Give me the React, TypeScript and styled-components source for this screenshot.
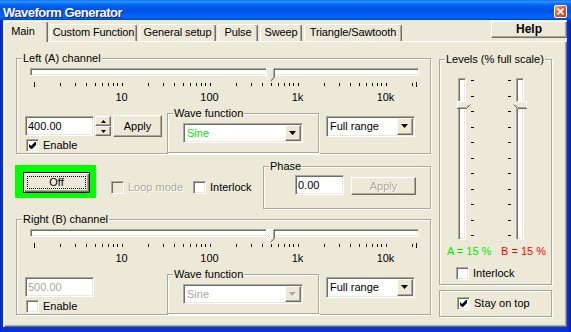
import React from "react";
import styled, { createGlobalStyle, css } from "styled-components";

const face = "#ece9d8";
const light = "#ffffff";
const shadow = "#aca899";
const dark = "#716f64";
const lime = "#00e800";

const GlobalStyle = createGlobalStyle`
  html, body { margin: 0; padding: 0; background: ${face}; }
  body {
    font-family: "Liberation Sans", Arial, sans-serif;
    font-size: 11px;
    line-height: 13px;
    color: #000;
  }
`;

const raised = css`
  background: ${face};
  border: 1px solid;
  border-color: ${light} ${dark} ${dark} ${light};
  box-shadow: inset -1px -1px ${shadow};
`;

const sunken = css`
  border: 1px solid;
  border-color: ${shadow} ${light} ${light} ${shadow};
  box-shadow: inset 1px 1px ${dark}, inset -1px -1px ${face};
`;

const disabledText = css`
  color: ${shadow};
  text-shadow: 1px 1px ${light};
`;

const Window = styled.div`
  width: 571px;
  height: 332px;
  display: flex;
  flex-direction: column;
  background: linear-gradient(to right, #001ea8 0, #0831d9 1px, #0831d9 568px, #0019b8 100%);
`;

const TitleBar = styled.div`
  height: 20px;
  flex: none;
  display: flex;
  align-items: flex-start;
  justify-content: space-between;
  padding: 0 4px 0 3px;
  background: linear-gradient(
    to bottom,
    #0058ee 0%, #3593ff 5%, #288eff 10%, #127dff 15%, #036ffc 20%,
    #0262ee 28%, #0057e5 38%, #0054e3 48%, #0055eb 60%, #005bf5 70%,
    #026afe 80%, #0062ef 90%, #0052d6 96%, #0040ab 100%
  );
`;

const Title = styled.span`
  padding-top: 5px;
  line-height: 15px;
  font-size: 13px;
  font-weight: 700;
  letter-spacing: -0.5px;
  color: #fff;
  text-shadow: 1px 1px #0a1883;
`;

const CloseBox = styled.div`
  margin-top: 5px;
  width: 13px;
  height: 13px;
  box-sizing: border-box;
  border: 1px solid #fff;
  border-radius: 2px;
  background: linear-gradient(135deg, #f2a58a 0%, #e0603a 45%, #c2401e 100%);
  display: flex;
  align-items: center;
  justify-content: center;
`;

const Body = styled.div`
  flex: 1;
  min-height: 0;
  margin: 0 4px 5px 3px;
  background: ${face};
  display: flex;
  flex-direction: column;
`;

const TabRow = styled.div`
  height: 21px;
  flex: none;
  display: flex;
  align-items: flex-end;
  padding-left: 1px;
`;

const Tab = styled.div<{ $w: number; $active?: boolean }>`
  position: relative;
  z-index: ${(p) => (p.$active ? 1 : 0)};
  box-sizing: border-box;
  flex: none;
  width: ${(p) => p.$w}px;
  height: ${(p) => (p.$active ? 21 : 17)}px;
  margin: 0 2px ${(p) => (p.$active ? -1 : 0)}px 0;
  padding: ${(p) => (p.$active ? "3px 6px 0 0" : "1px 0 0 0")};
  background: ${face};
  border: 1px solid;
  border-bottom: none;
  border-color: ${light} ${dark} transparent ${light};
  border-radius: 3px 3px 0 0;
  box-shadow: inset -1px 0 ${shadow};
  text-align: center;
  white-space: nowrap;
  letter-spacing: -0.1px;
`;

const Button = styled.div<{ $w: number; $h: number; $ml?: number; $mt?: number; $bold?: boolean; $off?: boolean }>`
  ${raised}
  box-sizing: border-box;
  flex: none;
  width: ${(p) => p.$w}px;
  height: ${(p) => p.$h}px;
  margin: ${(p) => p.$mt ?? 0}px 0 0 ${(p) => p.$ml ?? 0}px;
  display: flex;
  align-items: center;
  justify-content: center;
  font-weight: ${(p) => (p.$bold ? 700 : 400)};
  font-size: ${(p) => (p.$bold ? 12 : 11)}px;
  ${(p) => p.$off && disabledText}
`;

const HelpButton = styled(Button)`
  margin-left: auto;
  align-self: flex-start;
  margin-top: 1px;
`;

const Panel = styled.div`
  flex: 1;
  min-height: 0;
  margin-left: 1px;
  display: flex;
  align-items: flex-start;
  padding: 16px 0 0 11px;
  border: 1px solid;
  border-color: ${light} ${dark} ${dark} ${light};
  box-shadow: inset -1px -1px ${shadow};
`;

const LeftCol = styled.div`
  width: 415px;
  flex: none;
  display: flex;
  flex-direction: column;
`;

const RightCol = styled.div`
  width: 113px;
  flex: none;
  margin: 1px 0 0 8px;
  display: flex;
  flex-direction: column;
`;

const GroupBox = styled.div<{ $w: number; $h: number; $ml?: number; $mt?: number }>`
  position: relative;
  box-sizing: border-box;
  flex: none;
  width: ${(p) => p.$w}px;
  height: ${(p) => p.$h}px;
  margin: ${(p) => p.$mt ?? 0}px 0 0 ${(p) => p.$ml ?? 0}px;
  border: 1px solid ${shadow};
  box-shadow: inset 1px 1px ${light}, 1px 1px ${light};
`;

const PhaseGroup = styled(GroupBox)`
  margin-left: auto;
`;

const Caption = styled.span`
  position: absolute;
  top: -7px;
  left: 5px;
  padding: 0 1px;
  background: ${face};
  white-space: nowrap;
`;

/* horizontal log-scale trackbar */

const SliderBox = styled.div`
  position: relative;
  width: 389px;
  height: 37px;
  margin: 9px 0 0 13px;
`;

const HTrack = styled.div`
  ${sunken}
  box-sizing: border-box;
  height: 8px;
  margin-top: 1px;
  background: ${light};
`;

const ThumbHolder = styled.div<{ $left: number; $top: number }>`
  position: absolute;
  left: ${(p) => p.$left}px;
  top: ${(p) => p.$top}px;
  line-height: 0;
`;

const TickStrip = styled.svg`
  display: block;
  margin-top: 6px;
`;

const ScaleLabels = styled.div`
  position: relative;
  height: 13px;
  margin-top: 4px;
`;

const ScaleLabel = styled.span`
  position: absolute;
  top: 0;
  transform: translateX(-50%);
  white-space: nowrap;
`;

const posOf = (f: number) => 3.5 + 88 * Math.log10(f);

const freqTicks: number[] = [];
for (let d = 1; d <= 1000; d *= 10) for (let m = 1; m < 10; m++) freqTicks.push(m * d);
freqTicks.push(10000, 20000, 22050);

const scaleLabels: [number, string][] = [
  [10, "10"],
  [100, "100"],
  [1000, "1k"],
  [10000, "10k"],
];

function HThumb({ disabled }: { disabled?: boolean }) {
  const fill = disabled ? "url(#hatch)" : face;
  return (
    <svg width="10" height="15" viewBox="0 0 10 15">
      <polygon points="0,0 9,0 9,9.5 4.5,14 0,9.5" fill={fill} />
      <polyline points="0.5,9.5 0.5,0.5 8.5,0.5" stroke={light} fill="none" />
      <polyline points="0.5,9.5 4.5,13.5" stroke={light} fill="none" />
      <polyline points="8.5,0 8.5,9.5 4.5,13.5" stroke={dark} fill="none" />
      <polyline points="7.5,1 7.5,9 4.5,12" stroke={shadow} fill="none" />
    </svg>
  );
}

function FreqSlider({ thumb, disabled }: { thumb: number; disabled?: boolean }) {
  return (
    <SliderBox>
      <HTrack />
      <ThumbHolder $left={thumb} $top={0}>
        <HThumb disabled={disabled} />
      </ThumbHolder>
      <TickStrip width="389" height="5">
        {freqTicks.map((f, i) => {
          const big = i === 0 || i === freqTicks.length - 1;
          return (
            <rect key={f} x={Math.round(posOf(f))} y={big ? 0 : 1} width="1" height={big ? 5 : 3} fill="#000" />
          );
        })}
      </TickStrip>
      <ScaleLabels>
        {scaleLabels.map(([f, t]) => (
          <ScaleLabel key={t} style={{ left: posOf(f) }}>
            {t}
          </ScaleLabel>
        ))}
      </ScaleLabels>
    </SliderBox>
  );
}

/* edits, combos, checkboxes */

const Edit = styled.div<{ $w: number; $off?: boolean }>`
  ${sunken}
  box-sizing: border-box;
  flex: none;
  width: ${(p) => p.$w}px;
  height: 20px;
  padding: 1px 0 0 2px;
  line-height: 16px;
  background: ${light};
  color: ${(p) => (p.$off ? shadow : "#000")};
`;

const Spin = styled.div`
  flex: none;
  width: 16px;
  height: 20px;
  margin-left: 1px;
  display: flex;
  flex-direction: column;
`;

const SpinButton = styled.div`
  ${raised}
  box-sizing: border-box;
  height: 10px;
  display: flex;
  align-items: center;
  justify-content: center;
`;

const Combo = styled.div<{ $w: number; $h: number; $ml?: number; $mt?: number }>`
  ${sunken}
  box-sizing: border-box;
  flex: none;
  width: ${(p) => p.$w}px;
  height: ${(p) => p.$h}px;
  margin: ${(p) => p.$mt ?? 0}px 0 0 ${(p) => p.$ml ?? 0}px;
  padding: 1px;
  background: ${light};
  display: flex;
`;

const ComboText = styled.div<{ $color?: string }>`
  flex: 1;
  display: flex;
  align-items: center;
  padding-left: 2px;
  color: ${(p) => p.$color ?? "#000"};
`;

const ComboButton = styled.div`
  ${raised}
  box-sizing: border-box;
  width: 16px;
  flex: none;
  display: flex;
  align-items: center;
  justify-content: center;
`;

const CheckItem = styled.div<{ $w?: number; $ml?: number; $mt?: number; $off?: boolean }>`
  flex: none;
  display: flex;
  align-items: center;
  gap: 4px;
  height: 13px;
  width: ${(p) => (p.$w ? `${p.$w}px` : "auto")};
  margin: ${(p) => p.$mt ?? 0}px 0 0 ${(p) => p.$ml ?? 0}px;
  white-space: nowrap;
  ${(p) => p.$off && disabledText}
`;

const CheckBox = styled.span<{ $off?: boolean }>`
  ${sunken}
  box-sizing: border-box;
  flex: none;
  width: 13px;
  height: 13px;
  background: ${(p) => (p.$off ? face : light)};
  display: flex;
  align-items: center;
  justify-content: center;
`;

function Check({ checked, off }: { checked?: boolean; off?: boolean }) {
  return (
    <CheckBox $off={off}>
      {checked && (
        <svg width="7" height="7" viewBox="0 0 7 7">
          <path d="M0 2 L2 4 L6 0 L7 0 L7 3 L3 7 L2 7 L0 5 Z" fill="#000" />
        </svg>
      )}
    </CheckBox>
  );
}

function DownArrow({ off }: { off?: boolean }) {
  return (
    <svg width="8" height="5" viewBox="0 0 8 5">
      {off && <polygon points="1,1 8,1 4.5,5" fill={light} />}
      <polygon points="0,0 7,0 3.5,4" fill={off ? shadow : "#000"} />
    </svg>
  );
}

function Dropdown(props: { w: number; h: number; ml?: number; mt?: number; text: string; color?: string; off?: boolean }) {
  return (
    <Combo $w={props.w} $h={props.h} $ml={props.ml} $mt={props.mt}>
      <ComboText $color={props.off ? shadow : props.color}>{props.text}</ComboText>
      <ComboButton>
        <DownArrow off={props.off} />
      </ComboButton>
    </Combo>
  );
}

/* channel group */

const ControlsRow = styled.div`
  display: flex;
  align-items: flex-start;
  margin: 8px 0 0 8px;
`;

const FreqBlock = styled.div`
  width: 137px;
  flex: none;
  margin-top: 3px;
  display: flex;
  flex-direction: column;
`;

const FreqLine = styled.div`
  height: 20px;
  display: flex;
  align-items: flex-start;
`;

function Channel({ title, value, active }: { title: string; value: string; active: boolean }) {
  return (
    <GroupBox $w={415} $h={96}>
      <Caption>{title}</Caption>
      <FreqSlider thumb={236} disabled={!active} />
      <ControlsRow>
        <FreqBlock>
          <FreqLine>
            <Edit $w={69} $off={!active}>
              {value}
            </Edit>
            {active && (
              <>
                <Spin>
                  <SpinButton>
                    <svg width="5" height="3" viewBox="0 0 5 3">
                      <polygon points="0,3 2.5,0 5,3" fill="#000" />
                    </svg>
                  </SpinButton>
                  <SpinButton>
                    <svg width="5" height="3" viewBox="0 0 5 3">
                      <polygon points="0,0 5,0 2.5,3" fill="#000" />
                    </svg>
                  </SpinButton>
                </Spin>
                <Button $w={49} $h={22} $ml={2} $mt={-1}>
                  Apply
                </Button>
              </>
            )}
          </FreqLine>
          <CheckItem $ml={1} $mt={3}>
            <Check checked={active} />
            Enable
          </CheckItem>
        </FreqBlock>
        <GroupBox $w={152} $h={40} $ml={5}>
          <Caption>Wave function</Caption>
          <Dropdown w={120} h={20} ml={15} mt={9} text="Sine" color={lime} off={!active} />
        </GroupBox>
        <Dropdown w={89} h={21} ml={7} mt={3} text="Full range" />
      </ControlsRow>
    </GroupBox>
  );
}

/* middle row */

const MiddleRow = styled.div`
  height: 44px;
  margin: 11px 0 10px;
  display: flex;
  align-items: flex-start;
`;

const OffPanel = styled.div`
  box-sizing: border-box;
  flex: none;
  width: 81px;
  height: 33px;
  margin-left: -1px;
  padding: 7px 0 0 8px;
  background: #00ff00;
`;

const OffButton = styled.div`
  box-sizing: border-box;
  width: 67px;
  height: 21px;
  padding: 3px;
  background: ${face};
  border: 1px solid #000;
  box-shadow: inset 1px 1px ${light}, inset -1px -1px ${dark}, inset -2px -2px ${shadow};
  display: flex;
`;

const FocusRing = styled.div`
  flex: 1;
  border: 1px dotted #000;
  display: flex;
  align-items: center;
  justify-content: center;
`;

const PhaseRow = styled.div`
  display: flex;
  align-items: flex-start;
  padding: 8px 0 0 31px;
`;

/* levels */

const SliderPair = styled.div`
  display: flex;
  gap: 34px;
  padding: 18px 0 0 18px;
`;

const VSliderBox = styled.div<{ $flip?: boolean }>`
  position: relative;
  display: flex;
  flex-direction: ${(p) => (p.$flip ? "row-reverse" : "row")};
  gap: 5px;
  height: 162px;
`;

const VTrack = styled.div`
  ${sunken}
  box-sizing: border-box;
  width: 8px;
  height: 162px;
  background: ${light};
`;

const LevelRow = styled.div`
  display: flex;
  justify-content: space-between;
  margin-top: 5px;
  padding: 0 5px 0 7px;
`;

const LevelText = styled.span<{ $color: string }>`
  color: ${(p) => p.$color};
`;

function VThumb({ flip }: { flip?: boolean }) {
  return (
    <svg width="14" height="8" viewBox="0 0 14 8" style={flip ? { transform: "scaleX(-1)" } : undefined}>
      <polygon points="0,0 9.5,0 13.5,4 9.5,8 0,8" fill={face} />
      <polyline points="0.5,7.5 0.5,0.5 9.5,0.5 13,4" stroke={light} fill="none" />
      <polyline points="0,7.5 9.5,7.5 13.5,3.5" stroke={dark} fill="none" />
      <polyline points="1,6.5 9,6.5 12,3.5" stroke={shadow} fill="none" />
    </svg>
  );
}

function VSlider({ flip }: { flip?: boolean }) {
  return (
    <VSliderBox $flip={flip}>
      <VTrack />
      <svg width="3" height="162">
        {Array.from({ length: 11 }, (_, i) => (
          <rect key={i} x="0" y={2 + Math.round(15.5 * i)} width="3" height="1" fill="#000" />
        ))}
      </svg>
      <ThumbHolder $left={flip ? 5 : -1} $top={23}>
        <VThumb flip={flip} />
      </ThumbHolder>
    </VSliderBox>
  );
}

const tabs = [
  { label: "Main", w: 44, active: true },
  { label: "Custom Function", w: 87 },
  { label: "General setup", w: 77 },
  { label: "Pulse", w: 40 },
  { label: "Sweep", w: 42 },
  { label: "Triangle/Sawtooth", w: 98 },
];

export default function App() {
  return (
    <>
      <GlobalStyle />
      <svg width="0" height="0" style={{ position: "absolute" }}>
        <defs>
          <pattern id="hatch" width="2" height="2" patternUnits="userSpaceOnUse">
            <rect width="2" height="2" fill={face} />
            <rect width="1" height="1" fill={light} />
            <rect x="1" y="1" width="1" height="1" fill={light} />
          </pattern>
        </defs>
      </svg>
      <Window>
        <TitleBar>
          <Title>Waveform Generator</Title>
          <CloseBox>
            <svg width="7" height="7" viewBox="0 0 7 7">
              <path d="M0.5 0.5 L6.5 6.5 M6.5 0.5 L0.5 6.5" stroke="#fff" strokeWidth="1.6" />
            </svg>
          </CloseBox>
        </TitleBar>
        <Body>
          <TabRow>
            {tabs.map((t) => (
              <Tab key={t.label} $w={t.w} $active={t.active}>
                {t.label}
              </Tab>
            ))}
            <HelpButton $w={76} $h={17} $bold>
              Help
            </HelpButton>
          </TabRow>
          <Panel>
            <LeftCol>
              <Channel title="Left (A) channel" value="400.00" active />
              <MiddleRow>
                <OffPanel>
                  <OffButton>
                    <FocusRing>Off</FocusRing>
                  </OffButton>
                </OffPanel>
                <CheckItem $w={82} $ml={15} $mt={16} $off>
                  <Check off />
                  Loop mode
                </CheckItem>
                <CheckItem $mt={16}>
                  <Check />
                  Interlock
                </CheckItem>
                <PhaseGroup $w={168} $h={43} $mt={1}>
                  <Caption>Phase</Caption>
                  <PhaseRow>
                    <Edit $w={49}>0.00</Edit>
                    <Button $w={65} $h={18} $ml={7} $mt={2} $off>
                      Apply
                    </Button>
                  </PhaseRow>
                </PhaseGroup>
              </MiddleRow>
              <Channel title="Right (B) channel" value="500.00" active={false} />
            </LeftCol>
            <RightCol>
              <GroupBox $w={113} $h={226}>
                <Caption>Levels (% full scale)</Caption>
                <SliderPair>
                  <VSlider />
                  <VSlider flip />
                </SliderPair>
                <LevelRow>
                  <LevelText $color={lime}>A = 15 %</LevelText>
                  <LevelText $color="#ff0000">B = 15 %</LevelText>
                </LevelRow>
                <CheckItem $ml={16} $mt={9}>
                  <Check />
                  Interlock
                </CheckItem>
              </GroupBox>
              <GroupBox $w={113} $h={27} $mt={5}>
                <CheckItem $ml={17} $mt={6}>
                  <Check checked />
                  Stay on top
                </CheckItem>
              </GroupBox>
            </RightCol>
          </Panel>
        </Body>
      </Window>
    </>
  );
}
